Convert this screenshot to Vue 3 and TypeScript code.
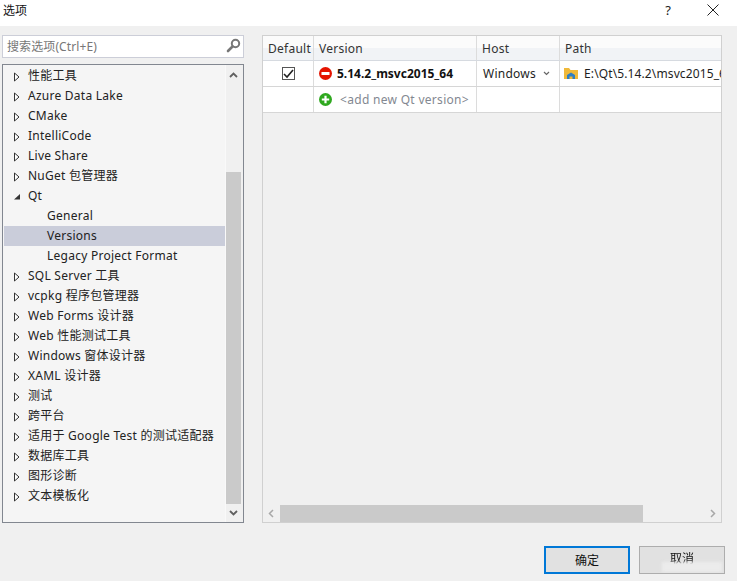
<script setup lang="ts">
interface TreeRow { label: string; kind: 'closed' | 'open' | 'child'; selected?: boolean }
const rows: TreeRow[] = [
  { label: '性能工具', kind: 'closed' },
  { label: 'Azure Data Lake', kind: 'closed' },
  { label: 'CMake', kind: 'closed' },
  { label: 'IntelliCode', kind: 'closed' },
  { label: 'Live Share', kind: 'closed' },
  { label: 'NuGet 包管理器', kind: 'closed' },
  { label: 'Qt', kind: 'open' },
  { label: 'General', kind: 'child' },
  { label: 'Versions', kind: 'child', selected: true },
  { label: 'Legacy Project Format', kind: 'child' },
  { label: 'SQL Server 工具', kind: 'closed' },
  { label: 'vcpkg 程序包管理器', kind: 'closed' },
  { label: 'Web Forms 设计器', kind: 'closed' },
  { label: 'Web 性能测试工具', kind: 'closed' },
  { label: 'Windows 窗体设计器', kind: 'closed' },
  { label: 'XAML 设计器', kind: 'closed' },
  { label: '测试', kind: 'closed' },
  { label: '跨平台', kind: 'closed' },
  { label: '适用于 Google Test 的测试适配器', kind: 'closed' },
  { label: '数据库工具', kind: 'closed' },
  { label: '图形诊断', kind: 'closed' },
  { label: '文本模板化', kind: 'closed' },
]
</script>

<template>
  <div class="dialog">
    <header class="titlebar">
      <span class="title">选项</span>
      <span class="help">?</span>
      <svg class="close" width="12" height="12" viewBox="0 0 12 12"><path d="M.5.5l11 11M11.500.5l-11 11" stroke="#222" stroke-width="1" fill="none" /></svg>
    </header>

    <main class="body">
      <aside class="left">
        <div class="search">
          <span class="placeholder">搜索选项(Ctrl+E)</span>
          <svg width="15" height="15" viewBox="0 0 15 15"><circle cx="9.500" cy="5.500" r="3.700" fill="none" stroke="#777" stroke-width="2" /><path d="M6.500 8.500L2 13" stroke="#777" stroke-width="2.600" stroke-linecap="round" /></svg>
        </div>
        <div class="tree">
          <div class="rows">
            <div v-for="row in rows" :key="row.label" class="row" :class="[row.kind, { selected: row.selected }]">
              <svg v-if="row.kind === 'closed'" class="arrow" width="6" height="10" viewBox="0 0 6 10"><path d="M.5 1L5 5 .5 9Z" fill="#fff" stroke="#333" /></svg>
              <svg v-else-if="row.kind === 'open'" class="arrow" width="6" height="10" viewBox="0 0 6 10"><path d="M0 7.500L6 2v5.500Z" fill="#333" /></svg>
              <span>{{ row.label }}</span>
            </div>
          </div>
          <div class="vscroll">
            <div class="vbtn up"><svg width="9" height="6" viewBox="0 0 9 6"><path d="M1 5l3.500-3.500L8 5" fill="none" stroke="#606060" stroke-width="1.800" /></svg></div>
            <div class="vtrack"><div class="vthumb" /></div>
            <div class="vbtn down"><svg width="9" height="6" viewBox="0 0 9 6"><path d="M1 1l3.500 3.500L8 1" fill="none" stroke="#606060" stroke-width="1.800" /></svg></div>
          </div>
        </div>
      </aside>

      <section class="grid-box">
        <div class="grid-inner">
          <div class="tr head">
            <div class="c c1">Default</div>
            <div class="c c2">Version</div>
            <div class="c c3">Host</div>
            <div class="c c4">Path</div>
          </div>
          <div class="tr">
            <div class="c c1 center">
              <span class="check"><svg width="11" height="10" viewBox="0 0 11 10"><path d="M1 5l3 3 6-7" fill="none" stroke="#222" stroke-width="1.600" /></svg></span>
            </div>
            <div class="c c2">
              <svg class="status" width="13" height="13" viewBox="0 0 13 13"><circle cx="6.500" cy="6.500" r="6.500" fill="#e51400" /><rect x="2.500" y="5" width="8" height="3" fill="#fff" /></svg>
              <b class="vname">5.14.2_msvc2015_64</b>
            </div>
            <div class="c c3 host">
              <span>Windows</span>
              <svg width="7" height="5" viewBox="0 0 7 5"><path d="M1 1l2.500 2.500L6 1" fill="none" stroke="#666" stroke-width="1.200" /></svg>
            </div>
            <div class="c c4 path">
              <svg class="folder" width="14" height="13" viewBox="0 0 14 13"><path d="M0 1h5l1.500 2H14v9H0Z" fill="#f0b93a" /><path d="M3 12V8l4-2.500L11 8v4H8.500V9.500h-3V12Z" fill="#2f7fc4" /></svg>
              <span class="pathtext">E:\Qt\5.14.2\msvc2015_64</span>
            </div>
          </div>
          <div class="tr">
            <div class="c c1" />
            <div class="c c2">
              <svg class="status" width="13" height="13" viewBox="0 0 13 13"><circle cx="6.500" cy="6.500" r="6.500" fill="#2fa81f" /><path d="M6.500 2.800v7.400M2.800 6.500h7.400" stroke="#fff" stroke-width="2.200" /></svg>
              <span class="add">&lt;add new Qt version&gt;</span>
            </div>
            <div class="c c3" />
            <div class="c c4" />
          </div>
          <div class="empty" />
          <div class="hscroll">
            <svg class="hchev" width="6" height="9" viewBox="0 0 6 9"><path d="M5 1L1.500 4.500 5 8" fill="none" stroke="#a8a8a8" stroke-width="1.500" /></svg>
            <div class="hthumb" />
            <div class="hrest" />
            <svg class="hchev" width="6" height="9" viewBox="0 0 6 9"><path d="M1 1l3.500 3.500L1 8" fill="none" stroke="#a8a8a8" stroke-width="1.500" /></svg>
          </div>
        </div>
      </section>
    </main>

    <footer class="footer">
      <button class="btn primary" type="button">确定</button>
      <button class="btn cancel" type="button"><span>取消</span><i class="smudge" /></button>
    </footer>
  </div>
</template>

<style>
html, body { margin: 0; background: #f0f0f0; }
</style>

<style scoped>
.dialog {
  width: 737px;
  height: 581px;
  overflow: hidden;
  background: #f0f0f0;
  color: #1e1e1e;
  font-family: "Noto Sans", "Noto Sans CJK SC", sans-serif;
  font-size: 12px;
  display: flex;
  flex-direction: column;
}
.titlebar {
  height: 26px;
  flex: none;
  background: #fff;
  display: flex;
  align-items: center;
  padding: 0 18px 6px 3px;
  box-sizing: border-box;
}
.title { flex: 1; font-size: 12px; color: #111; }
.help { font-size: 13px; margin-right: 36px; color: #222; }
.close { display: block; }
.body {
  display: flex;
  align-items: flex-start;
  height: 520px;
  flex: none;
  padding: 9px 0 0 2px;
  box-sizing: border-box;
}
.left { width: 242px; flex: none; display: flex; flex-direction: column; gap: 6px; }
.search {
  height: 23px;
  box-sizing: border-box;
  border: 1px solid #ccced8;
  background: #fff;
  display: flex;
  align-items: center;
  justify-content: space-between;
  padding: 0 2px 2px 4px;
  color: #777;
}
.placeholder { letter-spacing: 0.1px; }
.tree {
  height: 459px;
  box-sizing: border-box;
  border: 1px solid #828790;
  background: #f5f5f5;
  display: flex;
  padding: 1px 0 0 1px;
}
.rows { width: 221px; flex: none; }
.row {
  height: 20px;
  box-sizing: border-box;
  padding-bottom: 2px;
  padding-left: 24px;
  display: flex;
  align-items: center;
  white-space: nowrap;
  position: relative;
  letter-spacing: 0.25px;
  color: #222;
}
.row.child { padding-left: 43px; }
.row.selected { background: #cacdda; }
.arrow { position: absolute; left: 10px; top: 6px; }
.vscroll {
  width: 18px;
  flex: none;
  margin: -1px 0 0 0;
  height: 457px;
  display: flex;
  flex-direction: column;
  background: #f0f0f0;
  border-left: 1px solid #f9f9f9;
  box-sizing: border-box;
  padding-right: 2px;
}
.vbtn { flex: none; display: flex; align-items: center; justify-content: center; }
.vbtn.up { height: 20px; }
.vbtn.down { height: 18px; }
.vbtn svg { display: block; }
.vtrack { flex: 1; display: flex; flex-direction: column; justify-content: flex-end; }
.vthumb { height: 332px; background: #cacaca; }
.grid-box {
  margin-left: 18px;
  width: 460px;
  height: 488px;
  box-sizing: border-box;
  border: 1px solid #d0d0d0;
  background: #f0f0f0;
}
.grid-inner { display: flex; flex-direction: column; height: 100%; }
.tr { display: flex; height: 26px; flex: none; background: #fff; border-bottom: 1px solid #d6d6d6; box-sizing: border-box; }
.tr.head {
  height: 25px;
  background: linear-gradient(#fbfbfb 0 50%, #f1f3f6 50%);
  border-bottom: 1px solid #d6dae0;
  color: #333;
  letter-spacing: 0.25px;
}
.c { box-sizing: border-box; border-right: 1px solid #dcdcdc; display: flex; align-items: center; padding-left: 5px; white-space: nowrap; overflow: hidden; flex: none; }
.c1 { width: 51px; }
.c2 { width: 163px; }
.c3 { width: 83px; }
.c3.host { padding-left: 6px; }
.c4 { flex: 1; min-width: 0; border-right: none; }
.center { justify-content: center; padding-left: 0; }
.check {
  width: 13px;
  height: 13px;
  box-sizing: border-box;
  border: 1px solid #555;
  display: flex;
  align-items: center;
  justify-content: center;
  background: #fff;
}
.status { flex: none; margin-right: 5px; display: block; }
.vname { font-weight: 700; color: #111; }
.add { color: #838891; margin-left: 3px; letter-spacing: 0.3px; }
.host { justify-content: space-between; padding-right: 9px; letter-spacing: 0.25px; }
.folder { flex: none; margin: 0 6px 0 -1px; }
.pathtext { letter-spacing: 0.12px; }
.empty { flex: 1; }
.hscroll { height: 17px; flex: none; background: #f0f0f0; display: flex; align-items: center; }
.hchev { flex: none; margin: 0 5px; display: block; }
.hthumb { width: 363px; height: 100%; background: #cacaca; margin-left: 1px; }
.hrest { flex: 1; }
.footer { flex: 1; display: flex; justify-content: flex-end; align-items: flex-start; gap: 9px; padding: 0 12px 0 0; }
.btn {
  width: 86px;
  height: 28px;
  box-sizing: border-box;
  background: #e1e1e1;
  border: 1px solid #adadad;
  font: inherit;
  color: #111;
  padding: 0;
  position: relative;
  overflow: hidden;
}
.primary { border: 2px solid #0078d7; }
.cancel span { filter: blur(0.5px); position: relative; top: -2px; }
.smudge {
  position: absolute;
  left: 22px;
  top: 15px;
  width: 60px;
  height: 10px;
  background: #ececec;
  filter: blur(1.500px);
}
</style>
